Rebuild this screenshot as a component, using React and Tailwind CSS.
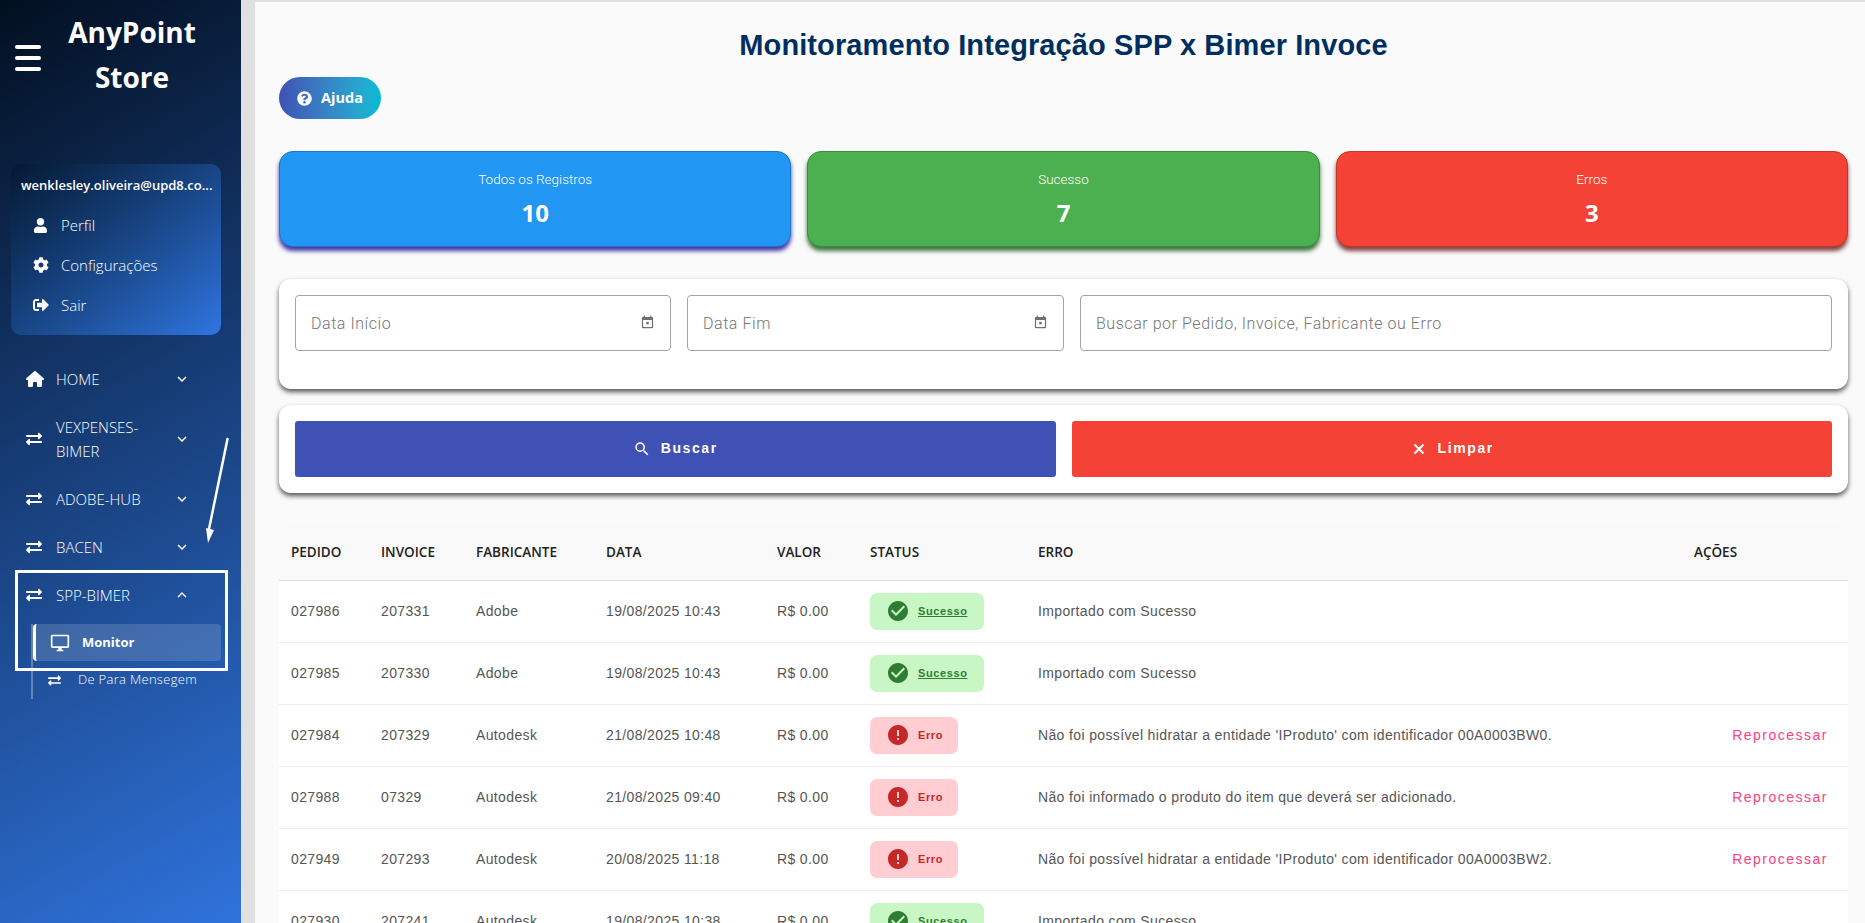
import React from 'react';
import { FaUser, FaCog, FaSignOutAlt, FaExchangeAlt, FaQuestionCircle } from 'react-icons/fa';
import { FaHouse } from 'react-icons/fa6';
import { MdSearch, MdOutlineDesktopWindows, MdKeyboardArrowDown, MdKeyboardArrowUp, MdCheckCircle, MdError } from 'react-icons/md';

const roboto = { fontFamily: 'Roboto, sans-serif' };
const openSans = { fontFamily: '"Open Sans", sans-serif' };
const arial = { fontFamily: '"Liberation Sans", sans-serif' };

const menu = [
  { label: 'HOME', icon: FaHouse, h: 'h-[48px]', home: true },
  { label: 'VEXPENSES-BIMER', icon: FaExchangeAlt, h: 'h-[72px]' },
  { label: 'ADOBE-HUB', icon: FaExchangeAlt, h: 'h-[48px]' },
  { label: 'BACEN', icon: FaExchangeAlt, h: 'h-[48px]' },
];

const rows = [
  ['027986', '207331', 'Adobe', '19/08/2025 10:43', 'ok', 'Importado com Sucesso'],
  ['027985', '207330', 'Adobe', '19/08/2025 10:43', 'ok', 'Importado com Sucesso'],
  ['027984', '207329', 'Autodesk', '21/08/2025 10:48', 'err', "Não foi possível hidratar a entidade 'IProduto' com identificador 00A0003BW0."],
  ['027988', '07329', 'Autodesk', '21/08/2025 09:40', 'err', 'Não foi informado o produto do item que deverá ser adicionado.'],
  ['027949', '207293', 'Autodesk', '20/08/2025 11:18', 'err', "Não foi possível hidratar a entidade 'IProduto' com identificador 00A0003BW2."],
  ['027930', '207241', 'Autodesk', '19/08/2025 10:38', 'ok', 'Importado com Sucesso'],
];

const CalendarIcon = () => (
  <svg className="w-[15px] h-[15px] text-[#6f6f6f] -mt-[1px]" viewBox="0 0 24 24" fill="currentColor">
    <path d="M19 3h-1V1h-2v2H8V1H6v2H5C3.9 3 3 3.9 3 5v14c0 1.1.9 2 2 2h14c1.1 0 2-.9 2-2V5c0-1.1-.9-2-2-2zm0 16H5V8h14v11z" />
    <path d="M10 11h4v4h-4z" />
  </svg>
);

const CloseIcon = () => (
  <svg className="w-[18px] h-[18px]" viewBox="0 0 24 24" fill="none" stroke="currentColor" strokeWidth="2.8">
    <path d="M6 6l12 12M18 6L6 18" />
  </svg>
);

const MenuItem = ({ item }) => {
  const Icon = item.icon;
  return (
    <div className={`flex items-center pl-[26px] ${item.h}`}>
      <span className="w-[30px] shrink-0">
        <Icon className={item.home ? 'w-[18px] h-[16px] text-white' : 'w-[16px] h-[16px] text-white'} />
      </span>
      <span className="w-[110px] text-[15px] leading-[24px] text-white font-light" style={openSans}>{item.label}</span>
      <MdKeyboardArrowDown className="ml-[7px] w-[18px] h-[18px] text-white" />
    </div>
  );
};

const Sidebar = () => (
  <aside className="relative w-[241px] shrink-0 h-full bg-[linear-gradient(150deg,#020f20_0%,#2f73dc_100%)] overflow-hidden">
    <div className="flex h-[164px]">
      <div className="w-[56px] pl-[15px] pt-[45px]">
        <div className="w-[26px] h-[4px] bg-white rounded-sm" />
        <div className="w-[26px] h-[4px] bg-white rounded-sm mt-[7px]" />
        <div className="w-[26px] h-[4px] bg-white rounded-sm mt-[7px]" />
      </div>
      <div className="w-[152px] text-center text-white font-bold text-[28px] leading-[45px] pt-[10px]" style={openSans}>
        AnyPoint Store
      </div>
    </div>
    <div className="mx-[11px] w-[210px] h-[171px] rounded-[10px] bg-gradient-to-br from-[#051a34] to-[#2f75e0] text-white">
      <div className="pt-[12px] pl-[10px] text-[13px] leading-[18px] font-semibold whitespace-nowrap" style={openSans}>wenklesley.oliveira@upd8.co...</div>
      <div className="mt-[11px] flex items-center h-[40px] pl-[22px]" style={openSans}>
        <FaUser className="w-[15px] h-[15px]" /><span className="ml-[13px] text-[15px] font-light">Perfil</span>
      </div>
      <div className="flex items-center h-[40px] pl-[22px]" style={openSans}>
        <FaCog className="w-[16px] h-[16px]" /><span className="ml-[12px] text-[15px] font-light">Configurações</span>
      </div>
      <div className="flex items-center h-[40px] pl-[22px]" style={openSans}>
        <FaSignOutAlt className="w-[16px] h-[16px]" /><span className="ml-[12px] text-[15px] font-light">Sair</span>
      </div>
    </div>
    <nav className="mt-[20px]">
      {menu.map((m) => <MenuItem key={m.label} item={m} />)}
      <div className="flex items-center pl-[26px] h-[48px]">
        <span className="w-[30px] shrink-0"><FaExchangeAlt className="w-[16px] h-[16px] text-white" /></span>
        <span className="w-[110px] text-[15px] text-white font-light" style={openSans}>SPP-BIMER</span>
        <MdKeyboardArrowUp className="ml-[7px] w-[18px] h-[18px] text-white" />
      </div>
      <div className="mt-[5px] ml-[31px] border-l-2 border-white/30 h-[75px]">
        <div className="h-[37px] w-[188px] rounded-[4px] border-l-[3px] border-white bg-white/15 flex items-center pl-[14px] text-white">
          <MdOutlineDesktopWindows className="w-[20px] h-[20px]" />
          <span className="ml-[12px] text-[13px] font-bold" style={openSans}>Monitor</span>
        </div>
        <div className="h-[38px] flex items-center pl-[15px] text-white">
          <FaExchangeAlt className="w-[13px] h-[13px]" />
          <span className="ml-[17px] text-[13px] font-light tracking-[0.3px]" style={openSans}>De Para Mensegem</span>
        </div>
      </div>
    </nav>
    <div className="absolute left-[15px] top-[570px] w-[213px] h-[101px] border-[3px] border-white pointer-events-none" />
    <svg className="absolute left-[200px] top-[437px]" width="32" height="110" viewBox="0 0 32 110" fill="none">
      <path d="M27.5 2 L9 92" stroke="white" strokeWidth="2.5" strokeLinecap="round" />
      <path d="M6 91 L14 93 L8 106 Z" fill="white" />
    </svg>
  </aside>
);

const StatCard = ({ label, value, cls }) => (
  <div className={`flex-1 h-[96px] rounded-[14px] text-white text-center pt-[17px] ${cls}`}>
    <div className="text-[13.5px] leading-[20px] font-light" style={roboto}>{label}</div>
    <div className="mt-[8px] text-[24px] leading-[32px] font-bold" style={openSans}>{value}</div>
  </div>
);

const Field = ({ label, calendar, cls }) => (
  <div className={`h-[56px] border border-[#a3a3a3] rounded-[4px] flex items-center pl-[15px] pr-[14px] bg-white ${cls}`}>
    <span className="flex-1 pt-[2px] text-[16px] text-[#757575] font-light tracking-[0.55px]" style={roboto}>{label}</span>
    {calendar && <span className="mr-[1px] flex"><CalendarIcon /></span>}
  </div>
);

const Status = ({ kind }) =>
  kind === 'ok' ? (
    <span className="inline-flex items-center align-middle h-[37px] w-[114px] rounded-[7px] bg-[#c8f7c5] pl-[16px] text-[#2e7d32]">
      <MdCheckCircle className="w-[24px] h-[24px]" />
      <span className="ml-[8px] text-[11px] font-bold underline tracking-[0.6px]" style={arial}>Sucesso</span>
    </span>
  ) : (
    <span className="inline-flex items-center align-middle h-[37px] w-[88px] rounded-[7px] bg-[#ffcdd2] pl-[16px] text-[#c62828]">
      <MdError className="w-[24px] h-[24px]" />
      <span className="ml-[8px] text-[11px] font-bold tracking-[0.6px]" style={arial}>Erro</span>
    </span>
  );

const Table = () => {
  const td = 'px-[12px] text-[14px] text-[#555] tracking-[0.36px] whitespace-nowrap';
  return (
    <div className="mt-[32px] rounded-t-[12px] overflow-hidden bg-white">
      <table className="w-full table-fixed border-collapse" style={arial}>
        <colgroup>
          <col className="w-[90px]" /><col className="w-[95px]" /><col className="w-[130px]" /><col className="w-[171px]" />
          <col className="w-[93px]" /><col className="w-[168px]" /><col /><col className="w-[166px]" />
        </colgroup>
        <thead>
          <tr className="h-[55px] bg-[#f9f9f9] border-b border-[#e0e0e0]">
            {['PEDIDO', 'INVOICE', 'FABRICANTE', 'DATA', 'VALOR', 'STATUS', 'ERRO', 'AÇÕES'].map((h) => (
              <th key={h} className="px-[12px] text-left text-[13.5px] font-semibold text-[#222] whitespace-nowrap" style={openSans}>{h}</th>
            ))}
          </tr>
        </thead>
        <tbody>
          {rows.map((r) => (
            <tr key={r[0]} className="h-[62px] border-b border-[#eeeeee]">
              <td className={td}>{r[0]}</td>
              <td className={td}>{r[1]}</td>
              <td className={td}>{r[2]}</td>
              <td className={td}>{r[3]}</td>
              <td className={td}>R$ 0.00</td>
              <td className="px-[12px]"><Status kind={r[4]} /></td>
              <td className={td}>{r[5]}</td>
              <td className="pl-[12px] pr-[20px] text-right">
                {r[4] === 'err' && <span className="text-[14px] tracking-[1.5px] text-[#ff4081]">Reprocessar</span>}
              </td>
            </tr>
          ))}
        </tbody>
      </table>
    </div>
  );
};

export default function App() {
  return (
    <div className="flex w-[1865px] h-[923px] overflow-hidden bg-[#e0e0e0]">
      <Sidebar />
      <main className="ml-[14px] mt-[2px] w-[1610px] shrink-0 h-[921px] overflow-hidden bg-[#fafafa] pl-[24px] pr-[17px]">
        <h1 className="pt-[25px] text-center text-[29px] leading-[36px] font-bold text-[#002f5f] tracking-[0.1px]" style={arial}>
          Monitoramento Integração SPP x Bimer Invoce
        </h1>
        <button className="mt-[14px] h-[42px] w-[102px] rounded-full bg-gradient-to-r from-[#3f51b5] to-[#00bcd4] flex items-center pl-[18px] text-white">
          <FaQuestionCircle className="w-[15px] h-[15px]" />
          <span className="ml-[9px] text-[14.5px] font-bold" style={openSans}>Ajuda</span>
        </button>
        <div className="mt-[32px] flex gap-[16px]">
          <StatCard label="Todos os Registros" value="10" cls="bg-[#2196f3] border border-[#1a78c2] shadow-[0_4px_4px_0_rgba(48,32,160,0.9)]" />
          <StatCard label="Sucesso" value="7" cls="bg-[#4caf50] border border-[#3d8c40] shadow-[0_4px_4px_0_rgba(27,94,32,0.85)]" />
          <StatCard label="Erros" value="3" cls="bg-[#f44336] border border-[#c33529] shadow-[0_4px_4px_0_rgba(100,20,20,0.8)]" />
        </div>
        <div className="mt-[32px] h-[110px] rounded-[12px] bg-white p-[16px] flex gap-[16px] shadow-[0_3px_5px_0_rgba(0,0,0,0.65)]">
          <Field label="Data Início" calendar cls="w-[376px]" />
          <Field label="Data Fim" calendar cls="w-[377px]" />
          <Field label="Buscar por Pedido, Invoice, Fabricante ou Erro" cls="flex-1" />
        </div>
        <div className="mt-[16px] h-[88px] rounded-[12px] bg-white p-[16px] flex gap-[16px] shadow-[0_3px_5px_0_rgba(0,0,0,0.65)]" style={arial}>
          <div className="flex-1 rounded-[3px] bg-[#3f51b5] text-white flex items-center justify-center">
            <MdSearch className="w-[18px] h-[18px]" />
            <span className="ml-[10px] -mt-[1px] text-[14px] font-bold tracking-[1.6px]">Buscar</span>
          </div>
          <div className="flex-1 rounded-[3px] bg-[#f44336] text-white flex items-center justify-center">
            <CloseIcon />
            <span className="ml-[10px] -mt-[1px] text-[14px] font-bold tracking-[1.6px]">Limpar</span>
          </div>
        </div>
        <Table />
      </main>
    </div>
  );
}
